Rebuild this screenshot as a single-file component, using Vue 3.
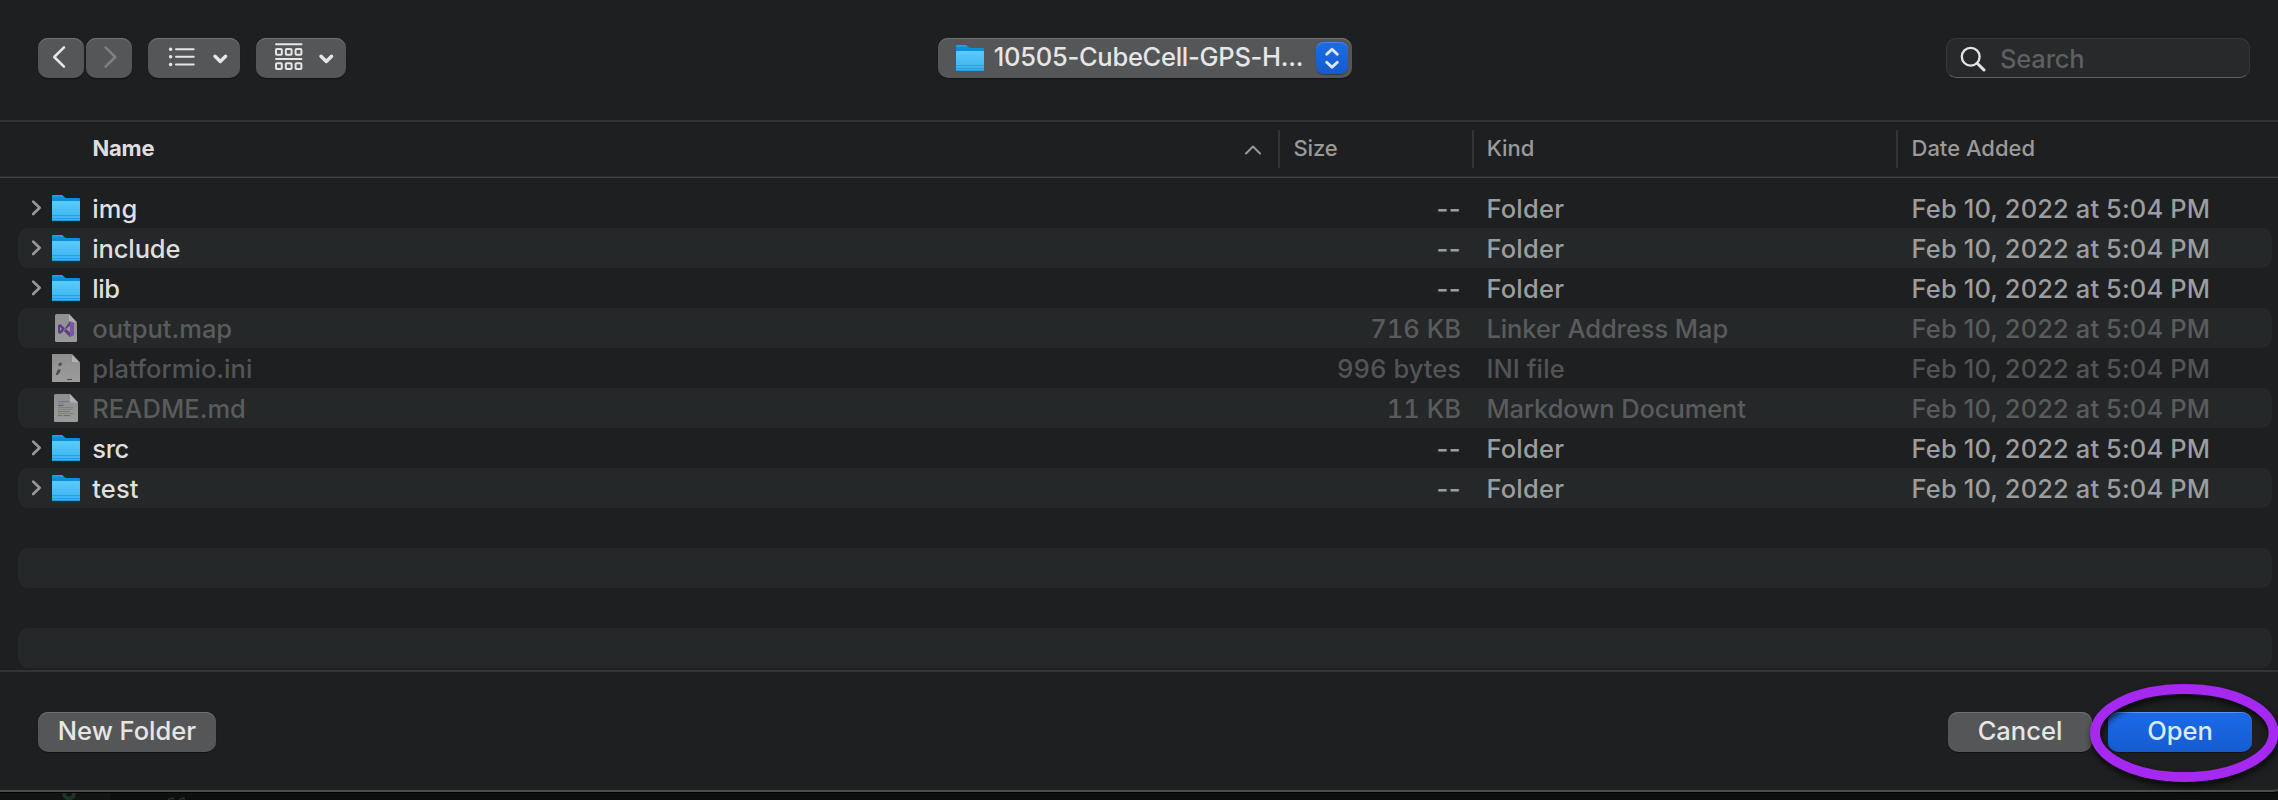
<script setup>
const date = 'Feb 10, 2022 at 5:04 PM'

const rows = [
  { name: 'img', icon: 'folder', size: '--', kind: 'Folder', nameTrack: 0.1, kindTrack: 0.22 },
  { name: 'include', icon: 'folder', size: '--', kind: 'Folder', nameTrack: -0.14, kindTrack: 0.22 },
  { name: 'lib', icon: 'folder', size: '--', kind: 'Folder', nameTrack: -0.45, kindTrack: 0.22 },
  { name: 'output.map', icon: 'vs', size: '716 KB', kind: 'Linker Address Map', nameTrack: 0, kindTrack: -0.07, disabled: true },
  { name: 'platformio.ini', icon: 'ini', size: '996 bytes', kind: 'INI file', nameTrack: 0.03, kindTrack: 0.1, disabled: true },
  { name: 'README.md', icon: 'md', size: '11 KB', kind: 'Markdown Document', nameTrack: 0.05, kindTrack: -0.1, disabled: true },
  { name: 'src', icon: 'folder', size: '--', kind: 'Folder', nameTrack: -0.4, kindTrack: 0.22 },
  { name: 'test', icon: 'folder', size: '--', kind: 'Folder', nameTrack: 0.1, kindTrack: 0.22 },
  {}, {}, {}, {},
]
</script>

<template>
  <div class="screen">
    <svg class="defs" width="0" height="0">
      <defs>
        <linearGradient id="folderFront" x1="0" y1="0" x2="0" y2="1">
          <stop offset="0" stop-color="#5ccbfb" />
          <stop offset="1" stop-color="#37b1ec" />
        </linearGradient>
        <linearGradient id="folderBack" x1="0" y1="0" x2="0" y2="1">
          <stop offset="0" stop-color="#35a5e0" />
          <stop offset="0.25" stop-color="#0a8fdb" />
        </linearGradient>
        <linearGradient id="page" x1="0" y1="0" x2="0" y2="1">
          <stop offset="0" stop-color="#8f8f8f" />
          <stop offset="1" stop-color="#9b9b9b" />
        </linearGradient>
        <symbol id="folder" viewBox="0 0 28 28">
          <path d="M0 2.2Q0 1 1.2 1H9.5Q10.6 1 11.4 1.9L12.6 3.2Q13.3 4 14.4 4H27Q28 4 28 5V12H0Z" fill="url(#folderBack)" />
          <path d="M0 8Q0 7 1 7H27Q28 7 28 8V26Q28 27 27 27H1Q0 27 0 26Z" fill="url(#folderFront)" />
          <path d="M0 21.5H28M0 24.5H28" stroke="#239dd9" stroke-width="0.8" />
          <path d="M0.3 26.6H27.7" stroke="#1991d0" stroke-width="0.8" />
        </symbol>
      </defs>
    </svg>

    <main class="dialog">
      <header class="toolbar">
        <div class="tools">
          <button class="btn nav">
            <svg width="46" height="40" viewBox="0 0 46 40"><path d="M26 9.3 16.2 19 26 28.7" class="line thin" /></svg>
          </button>
          <button class="btn nav off">
            <svg width="46" height="40" viewBox="0 0 46 40"><path d="M19.5 9.3 29.3 19 19.5 28.7" class="line thin" /></svg>
          </button>
          <button class="btn list">
            <svg width="92" height="40" viewBox="0 0 92 40">
              <g fill="#e6e6e6"><circle cx="22.6" cy="11.2" r="1.7" /><circle cx="22.6" cy="18.8" r="1.7" /><circle cx="22.6" cy="26.5" r="1.7" /></g>
              <path d="M28 11.2H45.7M28 18.8H45.7M28 26.5H45.7" class="line" stroke-width="2" />
              <path d="M67 18.2 72.3 23.5 77.6 18.2" class="line" stroke-width="3.4" />
            </svg>
          </button>
          <button class="btn group">
            <svg width="90" height="40" viewBox="0 0 90 40">
              <path d="M20 6.3H45.5M20 21H45.5" class="line" stroke-width="1.9" />
              <g class="line" stroke-width="2">
                <rect v-for="x in [20, 29.8, 39.6]" :key="'t' + x" :x="x" y="11" width="5.8" height="5.8" rx="1" />
                <rect v-for="x in [20, 29.8, 39.6]" :key="'b' + x" :x="x" y="25.3" width="5.8" height="5.8" rx="1" />
              </g>
              <path d="M65 18.2 70.3 23.5 75.6 18.2" class="line" stroke-width="3.4" />
            </svg>
          </button>
        </div>
        <button class="btn location">
          <svg width="28" height="28"><use href="#folder" /></svg>
          <span class="loc-name">10505-CubeCell-GPS-H...</span>
          <span class="stepper">
            <svg width="32" height="32" viewBox="0 0 32 32"><path d="M10.7 12.2 16 7.2 21.3 12.2M10.7 20.2 16 25.2 21.3 20.2" fill="none" stroke="#dfe9fb" stroke-width="2.9" stroke-linecap="round" stroke-linejoin="round" /></svg>
          </span>
        </button>
        <div class="search">
          <svg width="28" height="28" viewBox="0 0 28 28"><circle cx="12.7" cy="12.7" r="8.9" fill="none" stroke="#e4e4e4" stroke-width="2.3" /><path d="M19.2 19.2 26 26" stroke="#e4e4e4" stroke-width="3" stroke-linecap="round" /></svg>
          <span>Search</span>
        </div>
      </header>

      <div class="head">
        <div class="h-name">
          <span>Name</span>
          <svg width="18" height="12" viewBox="0 0 18 12"><path d="M2 9.5 9 2.5 16 9.5" fill="none" stroke="#9a9a9b" stroke-width="2" stroke-linecap="round" stroke-linejoin="round" /></svg>
        </div>
        <div class="h-cell h-size">Size</div>
        <div class="h-cell h-kind">Kind</div>
        <div class="h-cell h-date">Date Added</div>
      </div>

      <div class="rows">
        <div v-for="(r, i) in rows" :key="i" class="row" :class="{ stripe: i % 2, disabled: r.disabled }">
          <template v-if="r.name">
            <span class="twist">
              <svg v-if="r.icon === 'folder'" width="14" height="20" viewBox="0 0 14 20"><path d="M3.2 3.6 9.6 9.8 3.2 16" fill="none" stroke="#98999a" stroke-width="2.7" stroke-linecap="round" stroke-linejoin="round" /></svg>
            </span>
            <svg v-if="r.icon === 'folder'" class="icon" width="28" height="28"><use href="#folder" /></svg>
            <svg v-else-if="r.icon === 'vs'" class="icon" width="28" height="28" viewBox="0 0 28 28">
              <path d="M4.5 0H17L25 8.5V26.5Q25 28 23.5 28H4.5Q3 28 3 26.5V1.5Q3 0 4.5 0Z" fill="url(#page)" />
              <path d="M17 0 25 8.5H18.2Q17 8.5 17 7.3Z" fill="#b0b0b0" />
              <path d="M18 7 22 8.8V21.2L18 23Z" fill="#7c58a4" />
              <path d="M18 7V11.6L8.2 20 6 18.8V11.2L8.2 10 18 18.4V23L11.4 16.6ZM8 13V17L10 15Z" fill="#5b3c85" fill-rule="evenodd" />
            </svg>
            <svg v-else-if="r.icon === 'ini'" class="icon" width="28" height="28" viewBox="0 0 28 28">
              <path d="M0 0H20L28 8.5V28H0Z" fill="url(#page)" />
              <path d="M19.5 0 28 8.7H19.5Z" fill="#b2b2b2" stroke="#7a7a7a" stroke-width="0.5" />
              <path d="M7 8.7H10L9.3 11.8H6.3ZM5.8 15.5H9L7.8 18.5 5.6 21H3.6Z" fill="#4c4c4c" />
              <path d="M15.2 25.5H20" stroke="#454545" stroke-width="1" />
            </svg>
            <svg v-else class="icon" width="28" height="28" viewBox="0 0 28 28">
              <path d="M3.5 0H18L26 8.5V26.5Q26 28 24.5 28H3.5Q2 28 2 26.5V1.5Q2 0 3.5 0Z" fill="url(#page)" />
              <path d="M18 0 26 8.5H19.2Q18 8.5 18 7.3Z" fill="#b0b0b0" />
              <g fill="none" stroke-width="1">
                <path d="M6 7.7H17.5" stroke="#5e7f86" />
                <path d="M6 9.8H12" stroke="#8f7391" />
                <path d="M6 11.6H11.5" stroke="#a0426a" />
                <path d="M6 13.6H21.5M6 15.4H21M6 19.6H21.5" stroke="#7c8187" />
                <path d="M6 17.5H18" stroke="#746f95" />
                <path d="M6 21.6H10M11.5 21.6H18" stroke="#6b6a8c" />
              </g>
            </svg>
            <span class="name" :style="{ letterSpacing: r.nameTrack + 'px' }">{{ r.name }}</span>
            <span class="size" :class="{ dashes: r.size === '--' }">{{ r.size }}</span>
            <span class="kind" :style="{ letterSpacing: r.kindTrack + 'px' }">{{ r.kind }}</span>
            <span class="date">{{ date }}</span>
          </template>
        </div>
      </div>

      <footer class="footer">
        <button class="btn new">New Folder</button>
        <div class="actions">
          <button class="btn cancel">Cancel</button>
          <button class="btn open">Open</button>
        </div>
      </footer>
    </main>

    <div class="behind">
      <svg width="220" height="7" viewBox="0 0 220 7">
        <rect width="110" height="7" fill="#121313" />
        <path d="M64 -1Q64 5.5 69 5.5T74 -1" fill="none" stroke="#1e3429" stroke-width="3.6" />
        <path d="M168 7 171 5.3H173V7M179 7 182 5.3H184V7" fill="none" stroke="#2b2b2b" stroke-width="1.4" />
      </svg>
    </div>

    <svg class="ring" width="200" height="120" viewBox="0 0 200 120"><ellipse cx="104.3" cy="63" rx="89.3" ry="44" fill="none" stroke="#a529f0" stroke-width="10" /></svg>
  </div>
</template>

<style>
html, body { background: #0d0e0e; }
</style>

<style scoped>
.screen {
  position: relative;
  width: 2278px;
  height: 800px;
  overflow: hidden;
  background: #0d0e0e;
  font: 450 25.5px/1 Inter, "Liberation Sans", sans-serif;
  white-space: nowrap;
}
.screen * { box-sizing: border-box; }
.defs { position: absolute; }
svg { display: block; flex: none; }
.dialog {
  width: 2292px;
  height: 792px;
  background: #1e1f21;
  border-bottom: 2px solid #4c4d4f;
  border-radius: 0 0 20px 0;
  box-shadow: 0 1px 0 #000;
  display: flex;
  flex-direction: column;
}
.toolbar {
  height: 122px;
  padding: 38px 42px 0 38px;
  border-bottom: 2px solid #333436;
  display: flex;
  align-items: flex-start;
}
.tools { display: flex; width: 900px; }
.btn {
  border: 0;
  margin: 0;
  padding: 0;
  height: 40px;
  border-radius: 10px;
  background: #555658;
  box-shadow: inset 0 1px 0 #717274, 0 1px 1px rgba(0, 0, 0, 0.4);
  color: #e6e6e6;
  font: inherit;
}
.line { fill: none; stroke: #e6e6e6; stroke-linecap: round; stroke-linejoin: round; }
.thin { stroke-width: 2.5; }
.nav { width: 46px; margin-right: 2px; }
.off .line { stroke: #7e7f81; }
.list { width: 92px; margin-left: 14px; }
.group { width: 90px; margin-left: 16px; }
.location {
  width: 414px;
  display: flex;
  align-items: center;
  padding: 0 4px 0 18px;
}
.loc-name { flex: 1; text-align: left; margin-left: 9.8px; padding-bottom: 3px; letter-spacing: -0.28px; }
.stepper {
  width: 32px;
  height: 32px;
  border-radius: 8px;
  background: linear-gradient(#1b6ce8, #155bcd);
  box-shadow: inset 0 1px 0 #4286ee, 0 1px 1px rgba(0, 0, 0, 0.3);
}
.search {
  margin-left: 594px;
  width: 304px;
  height: 40px;
  border-radius: 10px;
  background: #27292a;
  border: 1px solid #37383a;
  border-bottom-color: #5c5d5f;
  display: flex;
  align-items: center;
  padding-left: 11px;
  color: #5e5f60;
}
.search span { margin-left: 14px; padding-top: 2px; letter-spacing: -0.18px; }
.head {
  height: 56px;
  border-bottom: 1px solid #434446;
  box-shadow: inset 0 -1px 0 #2a2b2d;
  display: flex;
  align-items: flex-start;
  padding-top: 8px;
  font-size: 22px;
  font-weight: 500;
  color: #9a9a9b;
}
.h-name {
  width: 1278px;
  height: 38px;
  padding: 0 16.5px 2px 92.4px;
  display: flex;
  align-items: center;
  justify-content: space-between;
  font-weight: 700;
  letter-spacing: -0.2px;
  color: #dededf;
}
.h-name svg { position: relative; top: 2px; }
.h-cell {
  height: 38px;
  border-left: 2px solid #333436;
  display: flex;
  align-items: center;
  padding: 0 0 2px 13.4px;
}
.h-size { width: 194px; letter-spacing: -0.1px; }
.h-kind { width: 424px; letter-spacing: -0.1px; padding-left: 12.8px; }
.h-date { padding-left: 13.5px; }
.rows {
  height: 494px;
  padding: 10px 20px 0 18px;
  border-bottom: 2px solid #333436;
}
.row {
  height: 40px;
  border-radius: 10px;
  display: flex;
  align-items: center;
  width: 2254px;
  color: #9c9d9d;
}
.stripe { background: #252829; }
.disabled { color: #535455; }
.disabled.stripe { color: #5a5b5c; }
.twist { width: 34px; padding-left: 11.7px; }
.icon { width: 28px; }
.name { width: 1111.5px; margin-left: 12.3px; padding-top: 1px; color: #dfdfdf; }
.disabled .name { color: inherit; }
.size { width: 257.2px; padding-top: 1px; text-align: right; font-feature-settings: "tnum"; }
.size.dashes { font-feature-settings: normal; letter-spacing: 0.4px; }
.kind { width: 425.2px; margin-left: 25.4px; padding-top: 1px; }
.date { padding-top: 1px; letter-spacing: 0.12px; }
.footer {
  flex: 1;
  display: flex;
  justify-content: space-between;
  padding: 40px 40px 0 38px;
}
.footer .btn { padding-bottom: 2px; }
.new { width: 178px; }
.actions { display: flex; gap: 16px; }
.cancel, .open { width: 144px; }
.open {
  background: linear-gradient(#1a6bea, #155ccf);
  box-shadow: inset 0 1px 0 #5b98f2, 0 1px 1px rgba(0, 0, 0, 0.4);
  color: #dde8fb;
}
.behind { margin-top: 1px; }
.ring {
  position: absolute;
  left: 2080px;
  top: 670px;
  filter: drop-shadow(1px 4px 3px rgba(0, 0, 0, 0.75));
}
</style>
